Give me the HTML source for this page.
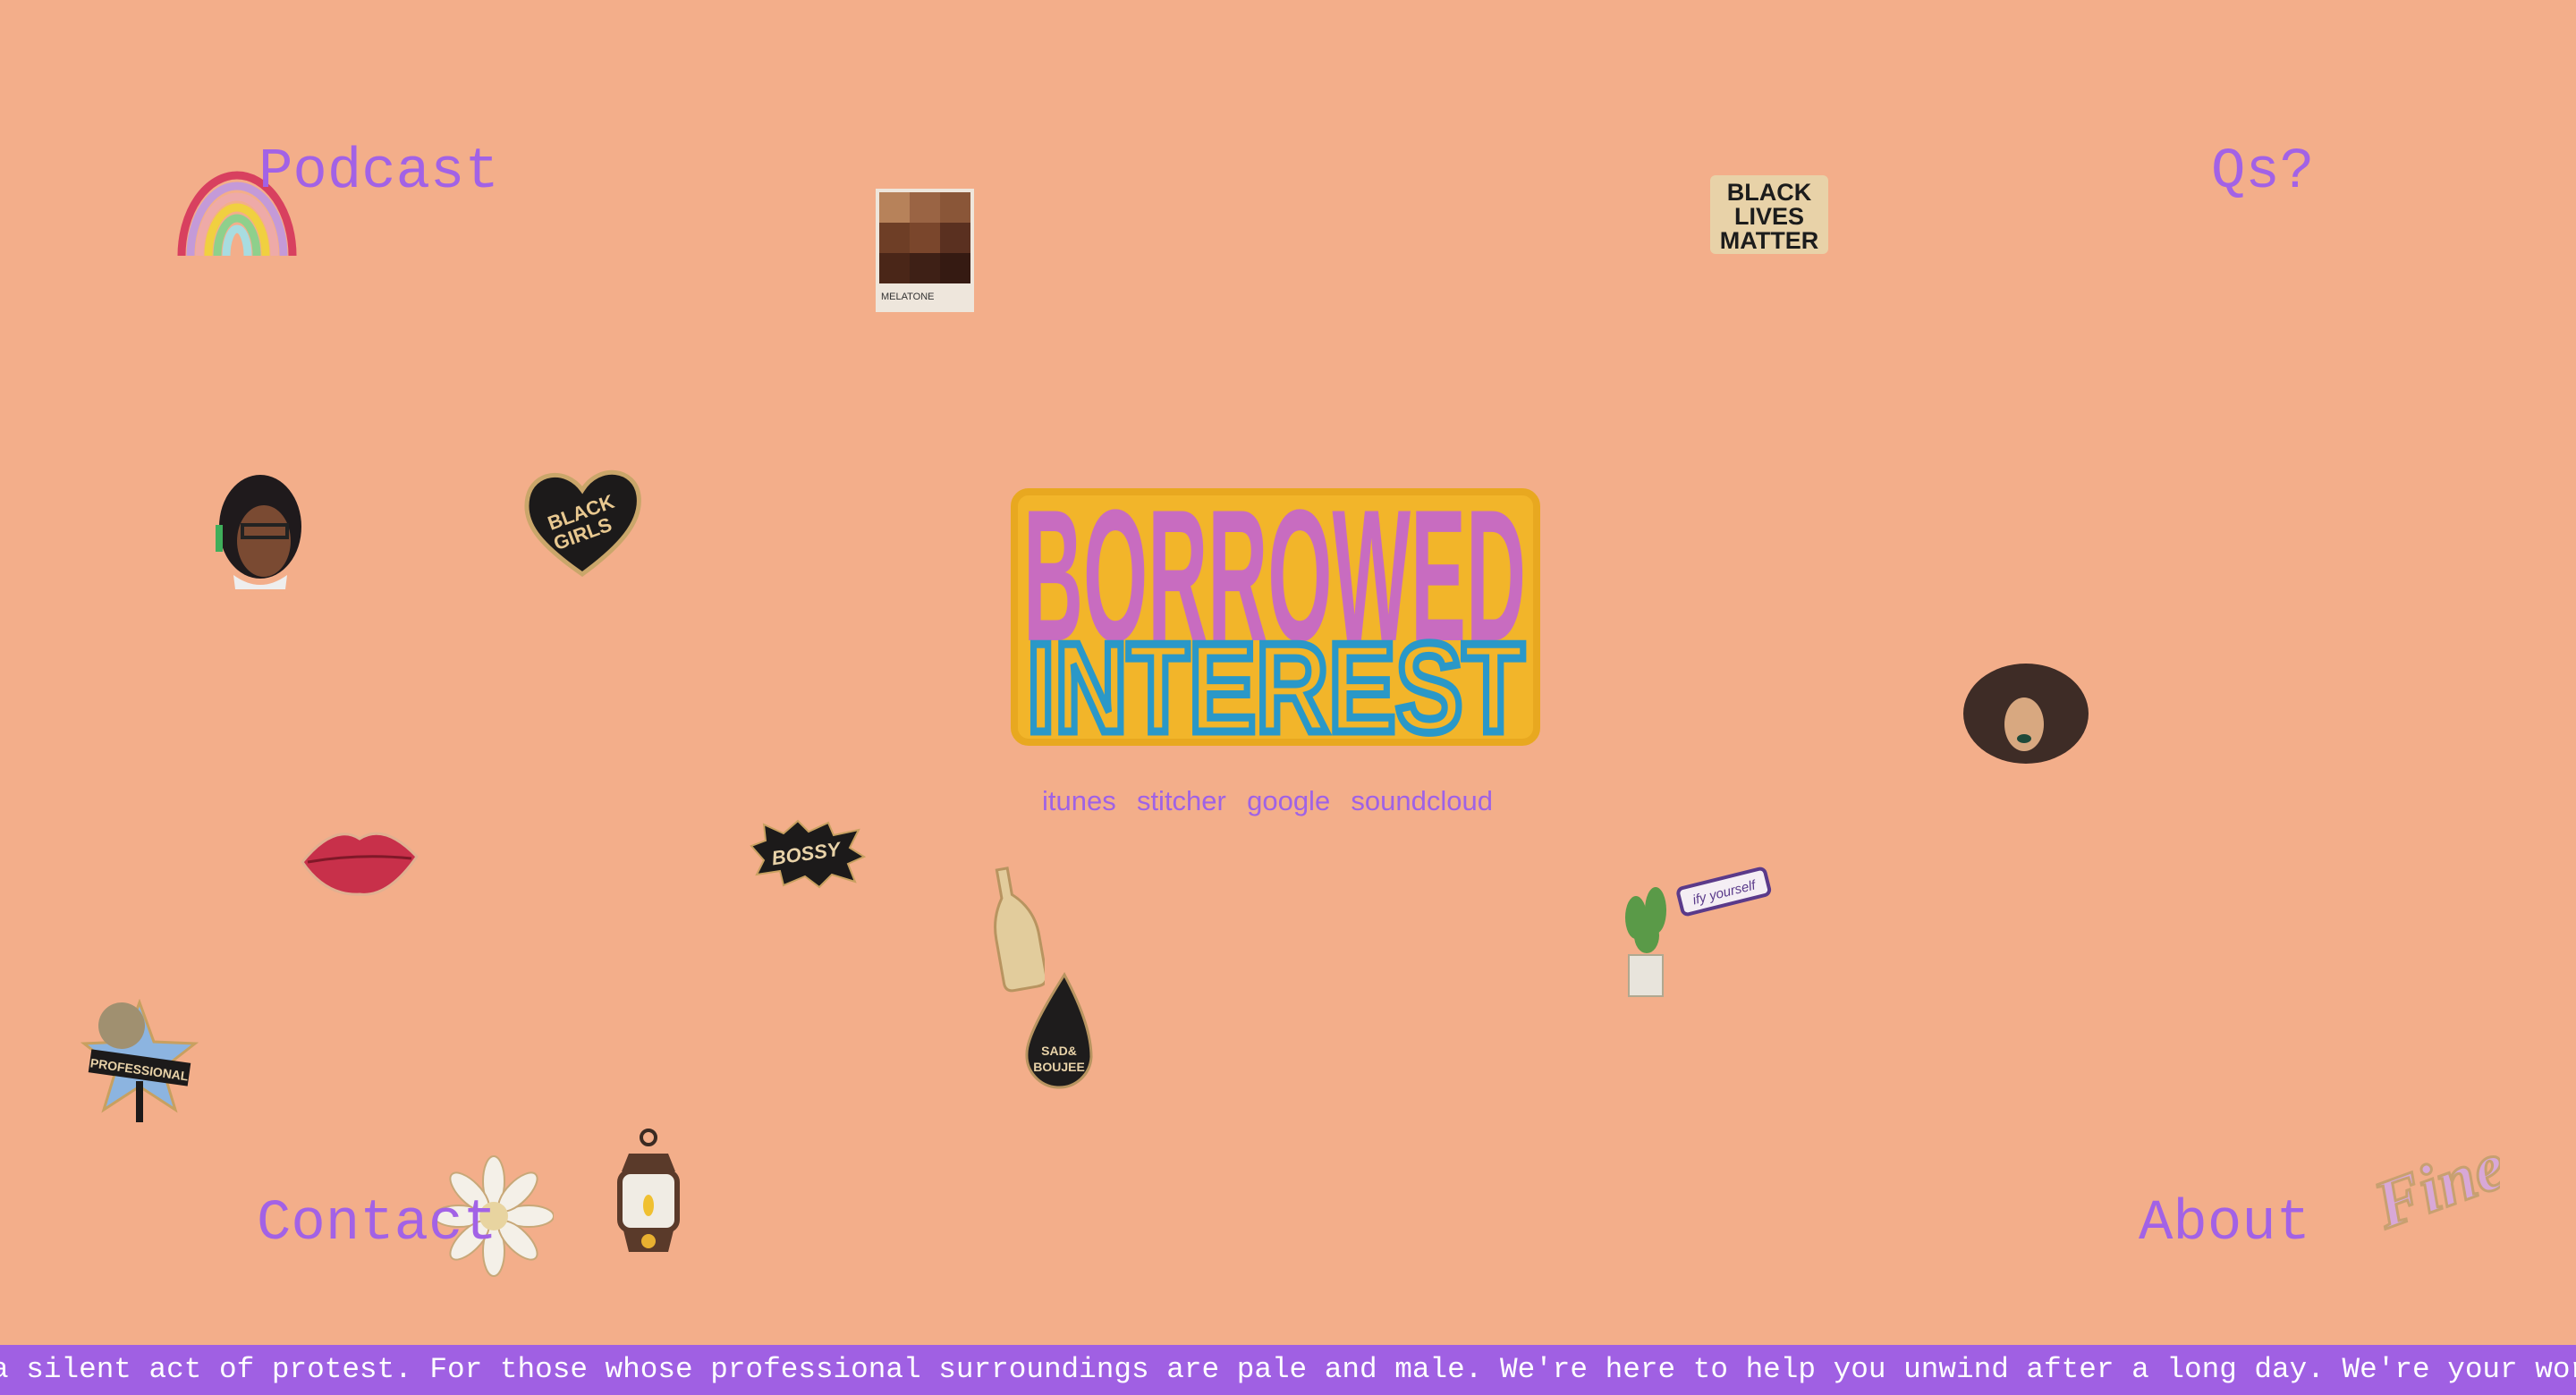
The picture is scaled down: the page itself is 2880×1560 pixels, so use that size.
<!DOCTYPE html>
<html><head><meta charset="utf-8"><style>
html,body{margin:0;padding:0;width:2880px;height:1560px;overflow:hidden;background:#f3ae8a;position:relative;font-family:"Liberation Sans",sans-serif}
.nav{position:absolute;font-family:"Liberation Mono",monospace;font-size:64px;color:#a262e6;line-height:1}
.s{position:absolute}
.links{position:absolute;left:1165px;top:878px;font-size:31px;color:#9f62e6;word-spacing:3px;white-space:nowrap}
.ticker{position:absolute;left:0;top:1504px;width:2880px;height:56px;background:#a060e3;color:#fff;font-family:"Liberation Mono",monospace;font-size:32.7px;line-height:56px;white-space:nowrap;overflow:hidden}
</style></head><body>

<!-- rainbow -->
<svg class="s" style="left:195px;top:178px" width="140" height="112" viewBox="0 0 140 112">
<g fill="none" stroke-width="9">
<path d="M8 108 A62 90 0 0 1 132 108" stroke="#d8405f"/>
<path d="M18 108 A52 78 0 0 1 122 108" stroke="#c49ad8"/>
<path d="M28 108 A42 66 0 0 1 112 108" stroke="#eeaaa8"/>
<path d="M38 108 A32 54 0 0 1 102 108" stroke="#f0d040"/>
<path d="M48 108 A22 42 0 0 1 92 108" stroke="#8ed08c"/>
<path d="M58 108 A12 30 0 0 1 82 108" stroke="#a8dce0"/>
</g></svg>

<!-- palette -->
<svg class="s" style="left:979px;top:211px" width="110" height="138" viewBox="0 0 110 138">
<rect width="110" height="138" fill="#eee6dc"/>
<rect x="4" y="4" width="34" height="34" fill="#b7825a"/><rect x="38" y="4" width="34" height="34" fill="#9a6444"/><rect x="72" y="4" width="34" height="34" fill="#8a5638"/>
<rect x="4" y="38" width="34" height="34" fill="#6e3e26"/><rect x="38" y="38" width="34" height="34" fill="#7a462c"/><rect x="72" y="38" width="34" height="34" fill="#5a3020"/>
<rect x="4" y="72" width="34" height="34" fill="#4a2618"/><rect x="38" y="72" width="34" height="34" fill="#3e2016"/><rect x="72" y="72" width="34" height="34" fill="#351a12"/>
<text x="6" y="124" font-size="11" fill="#333" font-family="Liberation Sans">MELATONE</text></svg>

<!-- BLM -->
<div class="s" style="left:1912px;top:196px;width:132px;height:88px;background:#e8d2a8;border-radius:6px;font:900 27px/27px 'Liberation Sans',sans-serif;color:#1c1c1c;text-align:center;padding-top:6px;box-sizing:border-box">BLACK<br>LIVES<br>MATTER</div>

<!-- face -->
<svg class="s" style="left:239px;top:527px" width="104" height="138" viewBox="0 0 104 138">
<ellipse cx="52" cy="62" rx="46" ry="58" fill="#1f1a1c"/>
<ellipse cx="56" cy="78" rx="30" ry="40" fill="#7a4a32"/>
<rect x="32" y="60" width="50" height="14" fill="none" stroke="#222" stroke-width="4"/>
<path d="M22 116 Q52 138 82 116 L80 132 L24 132Z" fill="#eee"/>
<path d="M6 60 v30" stroke="#3fae5a" stroke-width="8"/></svg>

<!-- heart -->
<svg class="s" style="left:582px;top:518px" width="138" height="130" viewBox="0 0 138 130">
<path d="M69 124 C20 90 2 66 8 38 C14 10 50 4 69 30 C88 0 128 6 132 36 C136 66 110 94 69 124Z" fill="#1c1a1a" stroke="#caa66a" stroke-width="5"/>
<text x="70" y="62" font-size="22" font-weight="bold" fill="#e8c890" text-anchor="middle" transform="rotate(-20 70 62)">BLACK</text>
<text x="72" y="86" font-size="22" font-weight="bold" fill="#e8c890" text-anchor="middle" transform="rotate(-20 72 86)">GIRLS</text></svg>

<!-- logo -->
<svg class="s" style="left:1130px;top:546px" width="592" height="288" viewBox="0 0 592 288">
<rect x="4" y="4" width="584" height="280" rx="16" fill="#f2b52a" stroke="#e8a820" stroke-width="8"/>
<text x="14" y="170" font-family="Liberation Sans" font-weight="bold" font-size="210" fill="#c86cc0" textLength="562" lengthAdjust="spacingAndGlyphs">BORROWED</text>
<text x="18" y="272" font-family="Liberation Sans" font-weight="bold" font-size="142" fill="none" stroke="#2a98c8" stroke-width="9" textLength="556" lengthAdjust="spacingAndGlyphs">INTEREST</text>
</svg>

<div class="links">itunes &nbsp;stitcher &nbsp;google &nbsp;soundcloud</div>

<!-- afro -->
<svg class="s" style="left:2193px;top:742px" width="145" height="122" viewBox="0 0 145 122">
<ellipse cx="72" cy="56" rx="70" ry="56" fill="#3e2c26"/>
<ellipse cx="70" cy="68" rx="22" ry="30" fill="#d8a880"/>
<ellipse cx="70" cy="84" rx="8" ry="5" fill="#1e4a3a"/></svg>

<!-- lips -->
<svg class="s" style="left:334px;top:920px" width="136" height="84" viewBox="0 0 136 84">
<path d="M4 44 Q40 0 68 18 Q96 0 132 38 Q100 84 68 80 Q30 82 4 44Z" fill="#c8304a" stroke="#e0b090" stroke-width="3"/>
<path d="M10 44 Q68 34 126 40" stroke="#801828" stroke-width="3" fill="none"/></svg>

<!-- bossy -->
<svg class="s" style="left:836px;top:916px" width="132" height="78" viewBox="0 0 132 78">
<polygon points="4,30 20,24 18,6 40,16 56,2 68,14 90,4 96,18 124,12 114,32 130,42 112,50 120,70 94,62 80,76 64,64 40,74 36,58 10,62 18,46" fill="#1c1a1a" stroke="#c8a060" stroke-width="2"/>
<text x="66" y="46" font-size="22" font-style="italic" font-weight="bold" fill="#e8d2a8" text-anchor="middle" transform="rotate(-8 66 46)">BOSSY</text></svg>

<!-- bottle -->
<svg class="s" style="left:1106px;top:966px" width="62" height="144" viewBox="0 0 62 144">
<path d="M20 4 h12 v30 q22 20 22 50 v46 q0 10 -12 10 h-26 q-10 0 -10 -10 v-50 q0 -24 14 -44z" fill="#e2cc9c" stroke="#b89460" stroke-width="3" transform="rotate(-10 31 72)"/></svg>

<!-- drop -->
<svg class="s" style="left:1140px;top:1086px" width="84" height="134" viewBox="0 0 84 134">
<path d="M50 4 Q8 70 8 92 A36 36 0 0 0 80 96 Q80 60 50 4Z" fill="#1e1c1c" stroke="#b89460" stroke-width="3"/>
<text x="44" y="94" font-size="14" font-weight="bold" fill="#e8d2a8" text-anchor="middle">SAD&amp;</text>
<text x="44" y="112" font-size="14" font-weight="bold" fill="#e8d2a8" text-anchor="middle">BOUJEE</text></svg>

<!-- plant -->
<svg class="s" style="left:1807px;top:966px" width="175" height="152" viewBox="0 0 175 152">
<rect x="14" y="102" width="38" height="46" fill="#e8e4dc" stroke="#b0a890" stroke-width="2"/>
<g fill="#5a9a48"><ellipse cx="22" cy="60" rx="12" ry="24"/><ellipse cx="44" cy="52" rx="12" ry="26"/><ellipse cx="34" cy="80" rx="14" ry="20"/></g>
<g transform="rotate(-14 120 30)"><rect x="70" y="16" width="100" height="30" rx="6" fill="#f4eef4" stroke="#5a3a8a" stroke-width="4"/>
<text x="120" y="37" font-size="15" font-style="italic" fill="#5a3a8a" text-anchor="middle">ify yourself</text></g></svg>

<!-- mic star -->
<svg class="s" style="left:90px;top:1117px" width="132" height="143" viewBox="0 0 132 143">
<polygon points="66,4 82,48 128,50 92,78 106,124 66,98 26,124 40,78 4,50 50,48" fill="#8cb4e0" stroke="#c8a060" stroke-width="3"/>
<ellipse cx="46" cy="30" rx="26" ry="26" fill="#a09070"/>
<rect x="10" y="64" width="112" height="26" fill="#1c1a1a" transform="rotate(8 66 77)"/>
<text x="66" y="84" font-size="14" font-weight="bold" fill="#e8d2a8" text-anchor="middle" transform="rotate(8 66 77)">PROFESSIONAL</text>
<rect x="62" y="92" width="8" height="46" fill="#1c1a1a"/></svg>

<!-- daisy -->
<svg class="s" style="left:485px;top:1291px" width="134" height="138" viewBox="0 0 134 138">
<g fill="#f4f0e8" stroke="#c8a878" stroke-width="2">
<ellipse cx="67" cy="30" rx="12" ry="28"/><ellipse cx="67" cy="108" rx="12" ry="28"/>
<ellipse cx="28" cy="69" rx="28" ry="12"/><ellipse cx="106" cy="69" rx="28" ry="12"/>
<ellipse cx="40" cy="42" rx="12" ry="28" transform="rotate(-45 40 42)"/><ellipse cx="94" cy="96" rx="12" ry="28" transform="rotate(-45 94 96)"/>
<ellipse cx="94" cy="42" rx="12" ry="28" transform="rotate(45 94 42)"/><ellipse cx="40" cy="96" rx="12" ry="28" transform="rotate(45 40 96)"/>
</g><circle cx="67" cy="69" r="16" fill="#e8d4a0"/></svg>

<!-- lantern -->
<svg class="s" style="left:681px;top:1260px" width="88" height="144" viewBox="0 0 88 144">
<circle cx="44" cy="12" r="8" fill="none" stroke="#3a2a22" stroke-width="4"/>
<path d="M22 30 h44 l8 20 h-60z" fill="#5a3a2a"/>
<rect x="12" y="50" width="64" height="66" rx="12" fill="#f0ece4" stroke="#5a3a2a" stroke-width="6"/>
<ellipse cx="44" cy="88" rx="6" ry="12" fill="#f0c030"/>
<path d="M16 116 h56 l-6 24 h-44z" fill="#5a3a2a"/><circle cx="44" cy="128" r="8" fill="#e8b030"/></svg>

<!-- fine -->
<svg class="s" style="left:2645px;top:1255px" width="150" height="125" viewBox="0 0 150 125">
<text x="8" y="100" font-family="Liberation Serif" font-style="italic" font-weight="bold" font-size="76" fill="#d8a8d8" stroke="#c8a070" stroke-width="3" transform="rotate(-20 70 70)">Fine</text></svg>

<div class="nav" style="left:289px;top:161px">Podcast</div>
<div class="nav" style="left:2472px;top:161px">Qs?</div>
<div class="nav" style="left:287px;top:1337px">Contact</div>
<div class="nav" style="left:2391px;top:1337px">About</div>

<div class="ticker"><span style="position:relative;left:-10px">a silent act of protest. For those whose professional surroundings are pale and male. We're here to help you unwind after a long day. We're your work wife.</span></div>
</body></html>
